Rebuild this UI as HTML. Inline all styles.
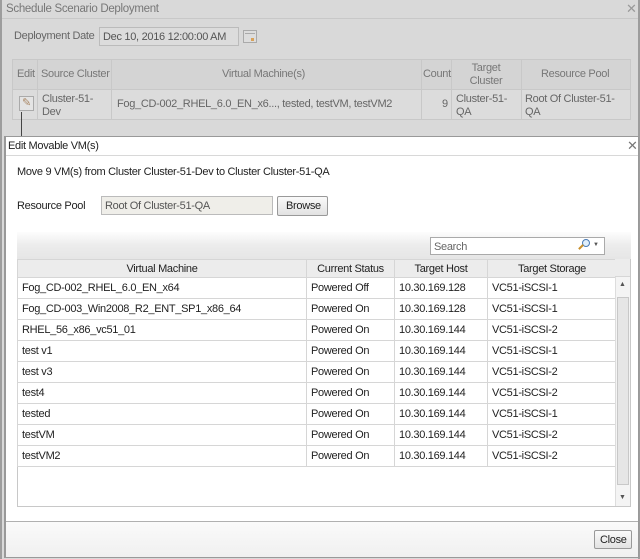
<!DOCTYPE html>
<html><head><style>
*{margin:0;padding:0;box-sizing:border-box}
body{width:640px;height:559px;position:relative;overflow:hidden;background:#9d9d9d;font-family:"Liberation Sans",sans-serif;font-size:11px;letter-spacing:-0.3px;color:#222}
.a{position:absolute}
.outer{left:2px;top:0;width:636px;height:559px;background:#d9d9d9}
.t{white-space:nowrap}
.v{position:absolute;top:59px;width:1px;height:61px;background:#c8c8c8}
table{border-collapse:collapse;table-layout:fixed}
td{border:1px solid #d6d6d6;padding:0 4px;white-space:nowrap;overflow:hidden}
</style></head><body>
<div class="a outer"></div>
<div class="a t" style="left:6px;top:3px;color:#777;font-size:11.5px">Schedule Scenario Deployment</div>
<div class="a t" style="left:626px;top:1px;color:#999;font-size:13px">✕</div>
<div class="a" style="left:2px;top:18px;width:636px;height:1px;background:#c8c8c8"></div>
<div class="a t" style="left:14px;top:30px;color:#666">Deployment Date</div>
<div class="a" style="left:99px;top:27px;width:140px;height:19px;border:1px solid #bbb;background:#dcdcdc"></div>
<div class="a t" style="left:103px;top:31px;color:#555">Dec 10, 2016 12:00:00 AM</div>
<div class="a" style="left:243px;top:30px;width:14px;height:13px;border:1px solid #aaa;background:#ddd"></div>
<div class="a" style="left:245px;top:33px;width:10px;height:1px;background:#aaa"></div>
<div class="a" style="left:251px;top:38px;width:3px;height:3px;background:#d9a25a"></div>
<div class="a" style="left:12px;top:59px;width:619px;height:61px;border:1px solid #c8c8c8;background:#d4d4d4"></div>
<div class="a" style="left:13px;top:89px;width:617px;height:30px;background:#dcdcdc;border-top:1px solid #c8c8c8"></div>
<div class="v" style="left:37px"></div>
<div class="v" style="left:111px"></div>
<div class="v" style="left:421px"></div>
<div class="v" style="left:451px"></div>
<div class="v" style="left:521px"></div>
<div class="a t" style="left:17px;top:68px;color:#777">Edit</div>
<div class="a t" style="left:41px;top:68px;color:#777">Source Cluster</div>
<div class="a t" style="left:222px;top:68px;color:#777">Virtual Machine(s)</div>
<div class="a t" style="left:423px;top:68px;color:#777">Count</div>
<div class="a" style="left:451px;top:62px;color:#777;width:70px;text-align:center;line-height:13px">Target<br>Cluster</div>
<div class="a t" style="left:541px;top:68px;color:#777">Resource Pool</div>
<div class="a" style="left:19px;top:96px;width:15px;height:15px;border:1px solid #aaa;background:#e4e4e4;color:#a86;font-size:11px;text-align:center;line-height:13px">✎</div>
<div class="a" style="left:42px;top:93px;color:#666;line-height:13px">Cluster-51-<br>Dev</div>
<div class="a t" style="left:117px;top:98px;color:#666">Fog_CD-002_RHEL_6.0_EN_x6..., tested, testVM, testVM2</div>
<div class="a t" style="left:442px;top:98px;color:#666">9</div>
<div class="a" style="left:456px;top:93px;color:#666;line-height:13px">Cluster-51-<br>QA</div>
<div class="a" style="left:525px;top:93px;color:#666;line-height:13px">Root Of Cluster-51-<br>QA</div>
<div class="a" style="left:21px;top:112px;width:1px;height:28px;background:#444"></div>

<div class="a" style="left:4px;top:136px;width:635px;height:422px;background:#fff;border:1px solid #999;border-width:1px 1px 2px 2px"></div>
<div class="a" style="left:6px;top:137px;width:632px;height:19px;background:#fff;border-bottom:1px solid #d8d8d8"></div>
<div class="a t" style="left:8px;top:140px;font-size:11px;color:#222">Edit Movable VM(s)</div>
<div class="a t" style="left:627px;top:138px;color:#777;font-size:13px">✕</div>
<div class="a t" style="left:17px;top:166px">Move 9 VM(s) from Cluster Cluster-51-Dev to Cluster Cluster-51-QA</div>
<div class="a t" style="left:17px;top:200px">Resource Pool</div>
<div class="a" style="left:101px;top:196px;width:172px;height:19px;border:1px solid #bbb;background:#efeee9"></div>
<div class="a t" style="left:105px;top:200px;color:#555">Root Of Cluster-51-QA</div>
<div class="a" style="left:277px;top:196px;width:51px;height:20px;border:1px solid #999;border-radius:2px;background:linear-gradient(#fafafa,#e2e2e2)"></div>
<div class="a t" style="left:286px;top:200px">Browse</div>
<div class="a" style="left:17px;top:232px;width:614px;height:27px;background:linear-gradient(#fdfdfd,#ececec 50%,#e6e6e6)"></div>
<div class="a" style="left:430px;top:237px;width:175px;height:18px;border:1px solid #aaa;background:#fff"></div>
<div class="a t" style="left:434px;top:241px;color:#666">Search</div>
<div class="a" style="left:582px;top:239px;width:8px;height:8px;border:1.5px solid #4a7bb5;border-radius:50%;background:#dfeefb"></div>
<div class="a" style="left:578px;top:246px;width:6px;height:2px;background:#c8902d;transform:rotate(-45deg)"></div>
<div class="a t" style="left:593px;top:242px;color:#555;font-size:6px">▼</div>
<div class="a" style="left:17px;top:259px;width:614px;height:248px;border:1px solid #c8c8c8;background:#fff"></div>
<table class="a" style="left:17px;top:259px;width:599px;">
<colgroup><col style="width:289px"><col style="width:88px"><col style="width:93px"><col style="width:129px"></colgroup>
<tr style="height:18px;background:#ececec;text-align:center"><td>Virtual Machine</td><td>Current Status</td><td>Target Host</td><td>Target Storage</td></tr>
<tr style="height:21px"><td>Fog_CD-002_RHEL_6.0_EN_x64</td><td>Powered Off</td><td>10.30.169.128</td><td>VC51-iSCSI-1</td></tr>
<tr style="height:21px"><td>Fog_CD-003_Win2008_R2_ENT_SP1_x86_64</td><td>Powered On</td><td>10.30.169.128</td><td>VC51-iSCSI-1</td></tr>
<tr style="height:21px"><td>RHEL_56_x86_vc51_01</td><td>Powered On</td><td>10.30.169.144</td><td>VC51-iSCSI-2</td></tr>
<tr style="height:21px"><td>test v1</td><td>Powered On</td><td>10.30.169.144</td><td>VC51-iSCSI-1</td></tr>
<tr style="height:21px"><td>test v3</td><td>Powered On</td><td>10.30.169.144</td><td>VC51-iSCSI-2</td></tr>
<tr style="height:21px"><td>test4</td><td>Powered On</td><td>10.30.169.144</td><td>VC51-iSCSI-2</td></tr>
<tr style="height:21px"><td>tested</td><td>Powered On</td><td>10.30.169.144</td><td>VC51-iSCSI-1</td></tr>
<tr style="height:21px"><td>testVM</td><td>Powered On</td><td>10.30.169.144</td><td>VC51-iSCSI-2</td></tr>
<tr style="height:21px"><td>testVM2</td><td>Powered On</td><td>10.30.169.144</td><td>VC51-iSCSI-2</td></tr>
</table>
<div class="a" style="left:615px;top:259px;width:15px;height:18px;background:#ececec;border-bottom:1px solid #d6d6d6"></div>
<div class="a" style="left:615px;top:277px;width:15px;height:229px;background:#f4f4f4;border-left:1px solid #ddd"></div>
<div class="a" style="left:617px;top:297px;width:12px;height:188px;background:#e6e6e6;border:1px solid #c8c8c8"></div>
<div class="a t" style="left:619px;top:281px;font-size:7px;color:#555">▲</div>
<div class="a t" style="left:619px;top:494px;font-size:7px;color:#555">▼</div>
<div class="a" style="left:6px;top:521px;width:632px;height:36px;border-top:1px solid #b0b0b0;background:linear-gradient(#fafafa,#f0f0f0)"></div>
<div class="a" style="left:594px;top:530px;width:38px;height:19px;border:1px solid #999;border-radius:2px;background:linear-gradient(#fafafa,#e2e2e2)"></div>
<div class="a t" style="left:600px;top:534px">Close</div>
</body></html>
